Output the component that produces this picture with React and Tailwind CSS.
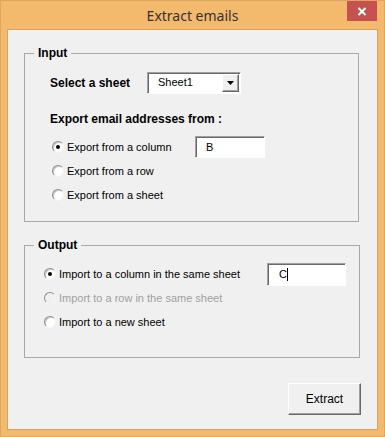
import React from 'react';

const Radio = ({ checked, disabled }) => (
    <span
        className={`w-[12px] h-[12px] rounded-full border border-t-[#8c8c8c] border-l-[#8c8c8c] border-r-[#f4f4f4] border-b-[#f4f4f4] flex items-center justify-center shrink-0 ${disabled ? 'bg-[#f0f0f0]' : 'bg-white shadow-[inset_1px_1px_0_#c8c8c8]'}`}
    >
        {checked && <span className="w-[4px] h-[4px] rounded-full bg-black"></span>}
    </span>
);

const TextBox = ({ value, className, caret }) => (
    <div
        className={`bg-white border border-t-[#a0a0a0] border-l-[#a0a0a0] border-r-white border-b-white shadow-[inset_1px_1px_0_#696969] flex items-center ${className}`}
    >
        <span className="text-black">{value}</span>
        {caret && <span className="w-px h-[13px] bg-black"></span>}
    </div>
);

const App = () => {
    return (
        <div
            className="w-[385px] h-[437px] bg-[#f3b96d] border border-[#dea760] flex flex-col text-[11px] text-black"
            style={{ fontFamily: '"Liberation Sans", Arial, sans-serif' }}
        >
            {/* Title bar */}
            <div className="h-[28px] relative flex items-center justify-center shrink-0">
                <span
                    className="text-[14px] text-[#333333] mt-[1px]"
                    style={{ fontFamily: '"Segoe UI", "Noto Sans", sans-serif' }}
                >
                    Extract emails
                </span>
                <div className="absolute right-[7px] top-0 w-[30px] h-[20px] bg-[#c75050] flex items-center justify-center">
                    <svg width="10" height="9" viewBox="0 0 10 9">
                        <path d="M1.5 1 L8.5 8 M8.5 1 L1.5 8" stroke="white" strokeWidth="2" />
                    </svg>
                </div>
            </div>

            {/* Client area */}
            <div className="mx-[6px] mb-[6px] flex-1 bg-[#f0f0f0] border border-[#d9a25c] flex flex-col">
                {/* Input group */}
                <fieldset className="ml-[16px] mt-[16px] w-[335px] h-[176px] border border-[#a8a8a8] flex flex-col">
                    <legend className="ml-[9px] px-[4px] font-bold text-[12px] leading-[14px]">Input</legend>
                    <div className="flex items-center pl-[25px] mt-[12px] h-[21px]">
                        <span className="w-[97px] font-bold text-[12px]">Select a sheet</span>
                        <div className="w-[94px] h-[22px] bg-white border border-t-[#a0a0a0] border-l-[#a0a0a0] border-r-white border-b-white shadow-[inset_1px_1px_0_#696969] flex items-center justify-between pl-[10px] pr-[1px]">
                            <span>Sheet1</span>
                            <div className="w-[17px] h-[18px] bg-[#f0f0f0] border border-t-white border-l-white border-r-[#696969] border-b-[#696969] shadow-[inset_-1px_-1px_0_#a0a0a0] flex items-center justify-center">
                                <svg width="7" height="4" viewBox="0 0 7 4">
                                    <path d="M0 0 H7 L3.5 4 Z" fill="black" />
                                </svg>
                            </div>
                        </div>
                    </div>
                    <div className="pl-[25px] mt-[19px] font-bold text-[12px] leading-[14px]">Export email addresses from :</div>
                    <div className="mt-[9px] flex flex-col pl-[27px]">
                        <div className="h-[24px] flex items-center">
                            <Radio checked />
                            <span className="ml-[3px] w-[128px]">Export from a column</span>
                            <TextBox value="B" className="w-[70px] h-[22px] pl-[10px]" />
                        </div>
                        <div className="h-[24px] flex items-center">
                            <Radio />
                            <span className="ml-[3px]">Export from a row</span>
                        </div>
                        <div className="h-[24px] flex items-center">
                            <Radio />
                            <span className="ml-[3px]">Export from a sheet</span>
                        </div>
                    </div>
                </fieldset>

                {/* Output group */}
                <fieldset className="ml-[16px] mt-[16px] w-[336px] h-[120px] border border-[#a8a8a8] flex flex-col">
                    <legend className="ml-[9px] px-[4px] font-bold text-[12px] leading-[14px]">Output</legend>
                    <div className="mt-[10px] flex flex-col pl-[19px]">
                        <div className="h-[24px] flex items-center">
                            <Radio checked />
                            <span className="ml-[3px] w-[208px]">Import to a column in the same sheet</span>
                            <TextBox value="C" caret className="w-[79px] h-[23px] pl-[11px]" />
                        </div>
                        <div className="h-[24px] flex items-center">
                            <Radio disabled />
                            <span className="ml-[3px] text-[#a0a0a0]">Import to a row in the same sheet</span>
                        </div>
                        <div className="h-[24px] flex items-center">
                            <Radio />
                            <span className="ml-[3px]">Import to a new sheet</span>
                        </div>
                    </div>
                </fieldset>

                <div className="mt-[25px] ml-[280px]">
                    <button className="w-[73px] h-[32px] bg-[#f0f0f0] border border-t-white border-l-white border-r-[#696969] border-b-[#696969] shadow-[inset_-1px_-1px_0_#a0a0a0] flex items-center justify-center text-[12px]">
                        Extract
                    </button>
                </div>
            </div>
        </div>
    );
};

export default App;
